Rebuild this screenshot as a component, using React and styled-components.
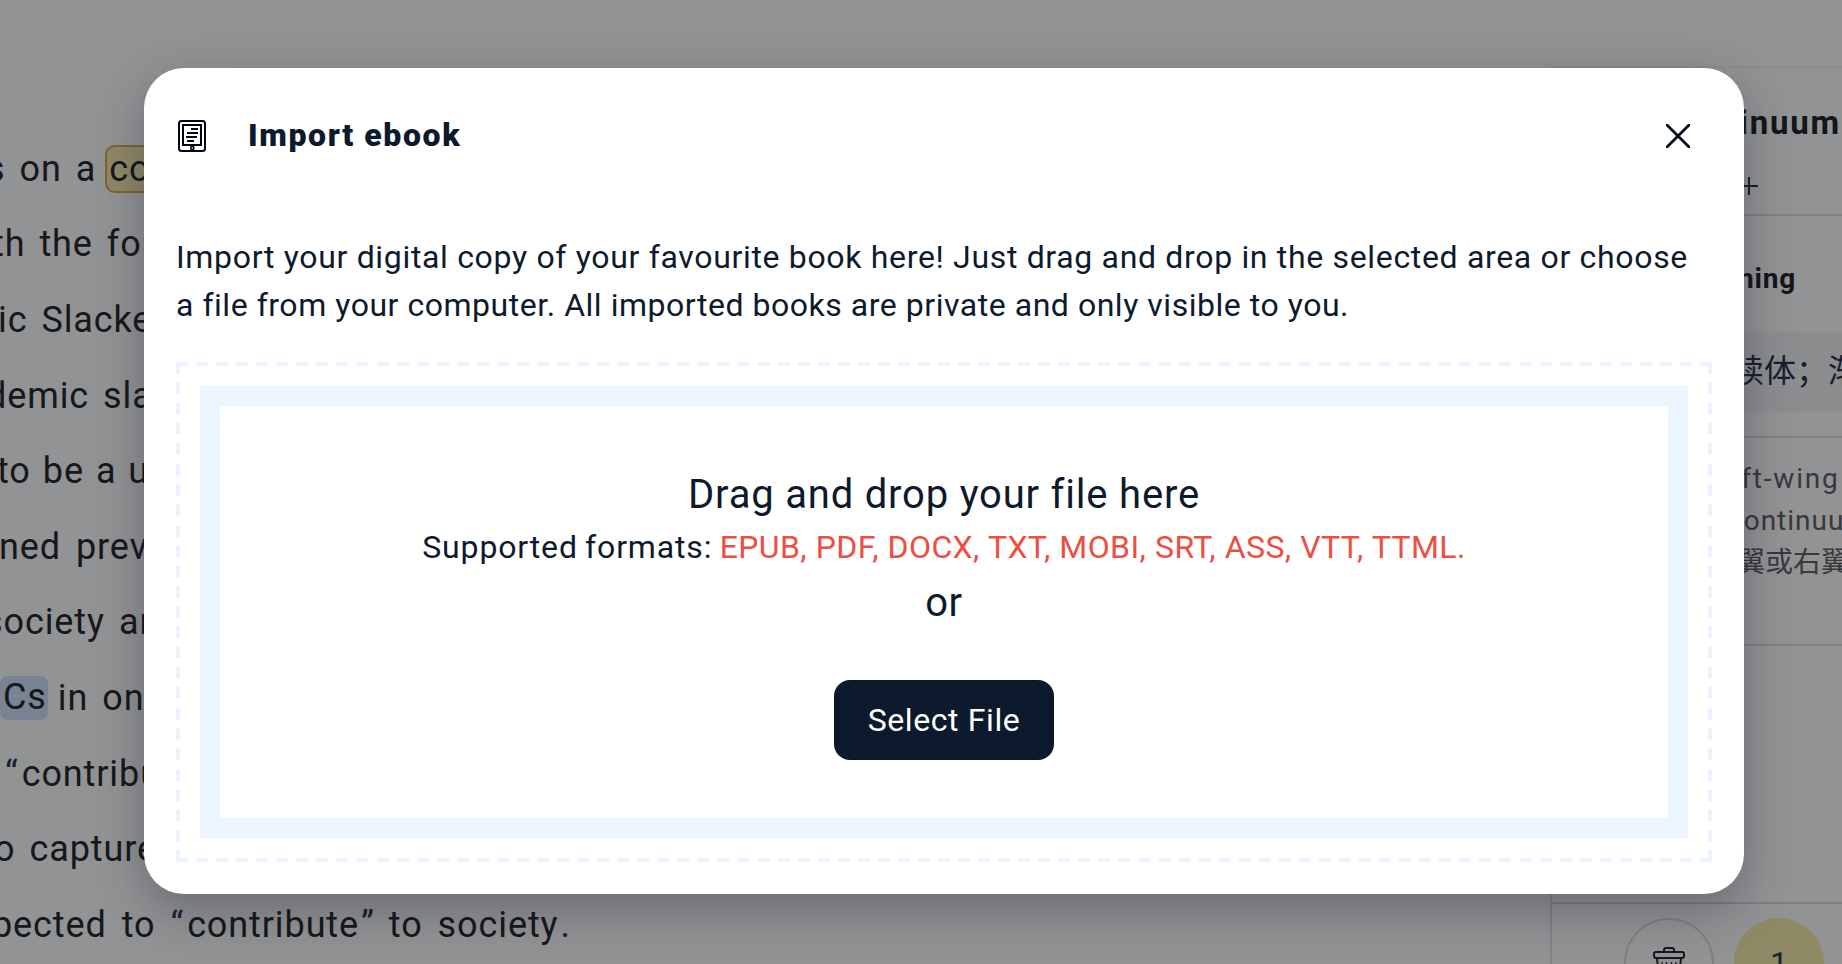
import React from 'react';
import styled, {createGlobalStyle} from 'styled-components';

const GlobalStyle = createGlobalStyle`
  * {
    box-sizing: border-box;
  }
  body {
    margin: 0;
    overflow: hidden;
    font-family: Roboto, 'Noto Sans CJK SC', sans-serif;
    color: #0d1a2d;
  }
  h1, h2, h3, p {
    margin: 0;
  }
`;

const Page = styled.div`
  position: relative;
  display: flex;
  width: 1842px;
  height: 964px;
  overflow: hidden;
  background: #fff;
`;

const Reader = styled.main`
  flex: 1;
  padding-top: 131px;
  overflow: hidden;
`;

const Line = styled.div`
  display: flex;
  align-items: center;
  gap: ${props => props.$gap || 14}px;
  height: 75.6px;
  margin-left: ${props => props.$offset}px;
  font-size: 36px;
  letter-spacing: 0.9px;
  white-space: nowrap;
  color: #26282b;
`;

const Quote = styled.span`
  margin: ${props => (props.$close ? '0 -1px 0 2px' : '0 3px 0 0')};
  color: #2b3a52;
`;

const Saved = styled.span`
  height: 48px;
  margin: 0 -5px;
  padding: 0 2px;
  line-height: 44px;
  border: 2px solid #dbab50;
  border-radius: 10px;
  background: #f9edac;
`;

const Known = styled.span`
  height: 44px;
  margin-right: -4px;
  padding: 0 1px 0 3px;
  line-height: 43px;
  border-radius: 8px;
  background: #d1e3ff;
`;

const Sidebar = styled.aside`
  display: flex;
  flex-direction: column;
  width: 292px;
  margin-top: 66px;
  border-top: 2px solid #f4f4f6;
  border-left: 2px solid #e2e3e8;
  overflow: hidden;
  white-space: nowrap;
`;

const Term = styled.section`
  flex: none;
  height: 148px;
  padding: 31px 0 0 46px;
  border-bottom: 2px solid #dcdde2;
`;

const TermTitle = styled.h2`
  font-size: 33px;
  line-height: 48px;
  font-weight: 700;
  letter-spacing: 1.8px;
  color: #232427;
  text-align: right;
  padding-right: 1px;
`;

const AddTag = styled.svg`
  display: block;
  margin: 30px 0 0 142px;
`;

const Meaning = styled.section`
  flex: none;
  height: 222px;
  padding-top: 42px;
  border-bottom: 2px solid #dcdde2;
`;

const MeaningTitle = styled.h3`
  padding-right: 46px;
  font-size: 28px;
  line-height: 42px;
  font-weight: 700;
  letter-spacing: 0.8px;
  text-align: right;
  color: #232427;
`;

const Translation = styled.p`
  height: 80px;
  margin-top: 32px;
  padding-left: 148px;
  font-size: 32px;
  line-height: 78px;
  background: #f5f5f7;
  color: #26344a;
`;

const Context = styled.section`
  flex: none;
  height: 208px;
  padding: 20px 0 0 184px;
  font-size: 28px;
  line-height: 42px;
  border-bottom: 2px solid #dcdde2;
  color: #5f6165;
`;

const ContextLine = styled.p`
  margin-left: ${props => props.$offset}px;
  letter-spacing: ${props => props.$spacing || 0}px;
`;

const Actions = styled.footer`
  display: flex;
  justify-content: flex-end;
  gap: 20px;
  flex: none;
  height: 106px;
  margin-top: 256px;
  padding: 14px 18px 0 0;
  border-top: 2px solid #d9dae0;
`;

const RoundButton = styled.button`
  display: flex;
  align-items: center;
  justify-content: center;
  flex: none;
  width: 90px;
  height: 90px;
  padding: 0;
  border: ${props => (props.$filled ? '0' : '2px solid #dcdde0')};
  border-radius: 50%;
  background: ${props => (props.$filled ? '#f9edac' : 'transparent')};
  font: 32px Roboto, sans-serif;
  color: #2b3a52;
`;

const Overlay = styled.div`
  position: absolute;
  inset: 0;
  padding: 68px 98px 70px 144px;
  background: rgba(3, 4, 8, 0.43);
`;

const Modal = styled.div`
  height: 826px;
  padding: 32px;
  border-radius: 40px;
  background: #fff;
  box-shadow: 0 16px 48px rgba(25, 28, 48, 0.34);
`;

const ModalHeader = styled.header`
  display: flex;
  align-items: center;
  height: 72px;
  padding: 0 22px 0 2px;
`;

const ModalTitle = styled.h1`
  flex: 1;
  margin: -2px 0 0 42px;
  font-size: 32px;
  line-height: 48px;
  font-weight: 900;
  letter-spacing: 1.6px;
`;

const CloseButton = styled.button`
  display: flex;
  padding: 0;
  border: 0;
  background: none;
`;

const Description = styled.p`
  margin-top: 61px;
  font-size: 32px;
  line-height: 48px;
  white-space: nowrap;
`;

const DescriptionLine = styled.span`
  display: block;
  letter-spacing: ${props => props.$spacing}px;
`;

const dashes = (angle, step) =>
  `repeating-linear-gradient(${angle}, #ecf3ff 0 12px, transparent 12px ${step}px)`;

const DropZone = styled.div`
  height: 500px;
  margin-top: 33px;
  padding: 24px;
  background-image: ${dashes('90deg', 20.053)}, ${dashes('90deg', 20.053)},
    ${dashes('180deg', 20.333)}, ${dashes('180deg', 20.333)};
  background-size: 100% 4px, 100% 4px, 4px 100%, 4px 100%;
  background-position: top, bottom, left, right;
  background-repeat: no-repeat;
`;

const DropArea = styled.div`
  display: flex;
  flex-direction: column;
  align-items: center;
  height: 452px;
  padding-top: 59px;
  border: 20px solid #ecf4ff;
`;

const DropText = styled.p`
  font-size: 40px;
  line-height: 60px;
  letter-spacing: ${props => props.$spacing}px;
`;

const Formats = styled.p`
  margin: -2px 0 2px;
  font-size: 32px;
  line-height: 48px;
  letter-spacing: 0.85px;
  word-spacing: -1.5px;
  white-space: nowrap;
`;

const FormatList = styled.span`
  color: #ee4e3f;
  letter-spacing: 0.4px;
  word-spacing: 0.4px;
`;

const SelectButton = styled.button`
  width: 220px;
  height: 80px;
  margin-top: 47px;
  padding: 0;
  border: 0;
  border-radius: 16px;
  background: #0d1a2d;
  color: #fff;
  font: 32px Roboto, sans-serif;
  letter-spacing: 0.6px;
`;

const BookIcon = () => (
  <svg width="28" height="32" viewBox="0 0 28 32" fill="none" stroke="#000814" strokeWidth="2">
    <rect x="1" y="1" width="26" height="30" rx="2.5" />
    <rect x="5" y="5" width="18" height="20" />
    <path d="M13 9h7M9 13h11M8 17h11M9 21h7" />
    <circle cx="14.3" cy="28" r="1.6" strokeWidth="1.6" />
  </svg>
);

const CloseIcon = () => (
  <svg width="24" height="24" viewBox="0 0 24 24" stroke="#000814" strokeWidth="2.8">
    <path d="M1 1l22 22M23 1L1 23" strokeLinecap="round" />
  </svg>
);

const TrashIcon = () => (
  <svg width="32" height="34" viewBox="0 0 32 34" fill="none" stroke="#26282e" strokeWidth="2">
    <path d="M11 6V4q0-2 2-2h6q2 0 2 2v2" />
    <rect x="1" y="6" width="30" height="6" rx="2" />
    <path d="M4 12l2 21h20l2-21" />
    <path d="M9 16l1 14M13.5 16v14M18.5 16v14M23 16l-1 14" strokeWidth="1.4" />
  </svg>
);

const Lines = () => (
  <Reader>
    <Line $offset={-14}>
      <span>s</span>
      <span>on</span>
      <span>a</span>
      <Saved>continuum</Saved>
    </Line>
    <Line $offset={-8}>
      <span>th</span>
      <span>the</span>
      <span>former</span>
    </Line>
    <Line $offset={-2}>
      <span>ic</span>
      <span>Slackers</span>
    </Line>
    <Line $offset={-14}>
      <span>demic</span>
      <span>slacker</span>
    </Line>
    <Line $offset={-3} $gap={12}>
      <span>to</span>
      <span>be</span>
      <span>a</span>
      <span>useful</span>
    </Line>
    <Line $offset={-1} $gap={15}>
      <span>ned</span>
      <span>previously</span>
    </Line>
    <Line $offset={-16}>
      <span>society</span>
      <span>and</span>
    </Line>
    <Line $offset={0}>
      <Known>Cs</Known>
      <span>in</span>
      <span>one</span>
    </Line>
    <Line $offset={5}>
      <span>
        <Quote>“</Quote>contribute
      </span>
    </Line>
    <Line $offset={-6}>
      <span>o</span>
      <span>capture</span>
    </Line>
    <Line $offset={-8} $gap={15}>
      <span>pected</span>
      <span>to</span>
      <span>
        <Quote>“</Quote>contribute<Quote $close>”</Quote>
      </span>
      <span>to</span>
      <span>
        society<Quote $close>.</Quote>
      </span>
    </Line>
  </Reader>
);

const WordPanel = () => (
  <Sidebar>
    <Term>
      <TermTitle>continuum</TermTitle>
      <AddTag width="18" height="18" viewBox="0 0 18 18" stroke="#26344a" strokeWidth="2">
        <path d="M9 0v18M0 9h18" />
      </AddTag>
    </Term>
    <Meaning>
      <MeaningTitle>Meaning</MeaningTitle>
      <Translation>连续体；渐变</Translation>
    </Meaning>
    <Context>
      <ContextLine $offset={-20} $spacing={1.8}>
        left-wing
      </ContextLine>
      <ContextLine $offset={-8} $spacing={1}>
        continuum
      </ContextLine>
      <ContextLine $offset={1}>翼或右翼</ContextLine>
    </Context>
    <Actions>
      <RoundButton>
        <TrashIcon />
      </RoundButton>
      <RoundButton $filled>1</RoundButton>
    </Actions>
  </Sidebar>
);

const ImportModal = () => (
  <Overlay>
    <Modal>
      <ModalHeader>
        <BookIcon />
        <ModalTitle>Import ebook</ModalTitle>
        <CloseButton>
          <CloseIcon />
        </CloseButton>
      </ModalHeader>
      <Description>
        <DescriptionLine $spacing={0.67}>
          Import your digital copy of your favourite book here! Just drag and drop in the selected area or choose
        </DescriptionLine>
        <DescriptionLine $spacing={0.53}>
          a file from your computer. All imported books are private and only visible to you.
        </DescriptionLine>
      </Description>
      <DropZone>
        <DropArea>
          <DropText $spacing={0.8}>Drag and drop your file here</DropText>
          <Formats>
            Supported formats:{' '}
            <FormatList>EPUB, PDF, DOCX, TXT, MOBI, SRT, ASS, VTT, TTML.</FormatList>
          </Formats>
          <DropText $spacing={0.6}>or</DropText>
          <SelectButton>Select File</SelectButton>
        </DropArea>
      </DropZone>
    </Modal>
  </Overlay>
);

export default class App extends React.Component {
  render() {
    return (
      <Page>
        <GlobalStyle />
        <Lines />
        <WordPanel />
        <ImportModal />
      </Page>
    );
  }
}
